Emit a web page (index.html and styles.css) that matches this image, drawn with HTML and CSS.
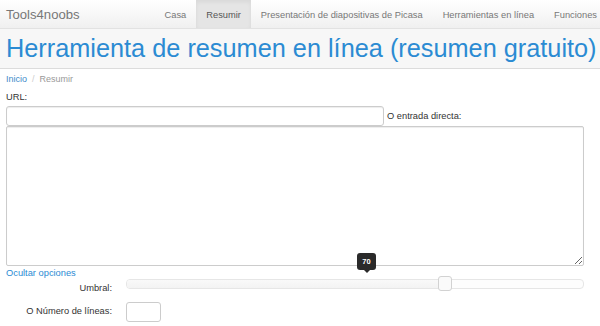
FILE: index.html
```html
<!DOCTYPE html>
<html lang="es">
<head>
    <meta charset="UTF-8">
    <meta name="viewport" content="width=device-width, initial-scale=1.0">
    <title>Herramienta de resumen en línea</title>
    <link rel="stylesheet" href="styles.css">
</head>
<body>
    <div class="navbar">
        <a href="#" class="brand">Tools4noobs</a>
        <ul class="nav">
            <li><a href="#">Casa</a></li>
            <li class="active"><a href="#">Resumir</a></li>
            <li><a href="#">Presentación de diapositivas de Picasa</a></li>
            <li><a href="#">Herramientas en línea</a></li>
            <li><a href="#">Funciones</a></li>
        </ul>
    </div>

    <div class="page-header">
        <h1>Herramienta de resumen en línea (resumen gratuito)</h1>
    </div>

    <div class="content">
        <ul class="breadcrumb">
            <li><a href="#">Inicio</a></li>
            <li class="divider">/</li>
            <li class="current">Resumir</li>
        </ul>

        <form class="summary-form">
            <label for="url" class="field-label">URL:</label>
            <div class="url-row">
                <input type="text" id="url" name="url" class="url-input">
                <label for="text" class="direct-label">O entrada directa:</label>
            </div>
            <textarea id="text" name="text" class="text-input"></textarea>

            <a href="#" class="toggle-options">Ocultar opciones</a>

            <div class="options">
                <label class="option-label">Umbral:</label>
                <div class="slider">
                    <div class="slider-track">
                        <div class="slider-selection" style="width: 69.6%"></div>
                    </div>
                    <div class="slider-handle" style="left: 69.6%"></div>
                    <div class="slider-tooltip">70</div>
                </div>

                <label for="lines" class="option-label">O Número de líneas:</label>
                <div>
                    <input type="text" id="lines" name="lines" class="lines-input">
                </div>
            </div>
        </form>
    </div>
</body>
</html>
```

FILE: styles.css
```css
body, html {
    margin: 0;
    padding: 0;
    font-family: "Liberation Sans", Arial, sans-serif;
    font-size: 9.3px;
    color: #333;
    background: #fff;
    overflow: hidden;
}

a {
    text-decoration: none;
}

/* barra superior */
.navbar {
    display: flex;
    align-items: stretch;
    height: 28px;
    background: linear-gradient(to bottom, #ffffff, #f0f0f0);
    border-bottom: 1px solid #e2e2e2;
    white-space: nowrap;
}

.brand {
    display: flex;
    align-items: center;
    padding: 1px 0 0 6px;
    font-size: 13.1px;
    color: #777;
}

.nav {
    display: flex;
    margin: 0 0 0 75px;
    padding: 0;
    list-style: none;
}

.nav li a {
    display: flex;
    align-items: center;
    height: 100%;
    padding: 1px 10px 0;
    box-sizing: border-box;
    color: #777;
}

.nav li.active a {
    background: #e5e5e5;
    color: #555;
    box-shadow: inset 0 2px 4px rgba(0,0,0,0.06);
}

/* cabecera */
.page-header {
    background: #f7f7f7;
    border-bottom: 1px solid #dcdcdc;
    height: 39px;
    padding-left: 6px;
}

h1 {
    margin: 0;
    font-size: 25.3px;
    font-weight: normal;
    line-height: 38px;
    color: #2b8bd3;
    white-space: nowrap;
}

.content {
    padding: 0 16px 0 6px;
}

.breadcrumb {
    display: flex;
    gap: 5px;
    margin: 4px 0 0;
    padding: 0;
    list-style: none;
    font-size: 9px;
    line-height: 12px;
}

.breadcrumb a {
    color: #428bca;
}

.breadcrumb .divider {
    color: #ccc;
}

.breadcrumb .current {
    color: #999;
}

.field-label {
    display: block;
    margin-top: 6px;
    line-height: 12px;
}

.url-row {
    display: flex;
    align-items: center;
    margin-top: 3px;
}

.url-input {
    box-sizing: border-box;
    width: 378px;
    height: 20px;
    margin: 0;
    border: 1px solid #ccc;
    border-radius: 3px;
    box-shadow: inset 0 1px 1px rgba(0,0,0,0.075);
}

.direct-label {
    margin-left: 3px;
}

.text-input {
    display: block;
    box-sizing: border-box;
    width: 578px;
    height: 140px;
    margin: 0;
    border: 1px solid #ccc;
    border-radius: 2px;
    box-shadow: inset 0 1px 1px rgba(0,0,0,0.075);
}

.toggle-options {
    display: block;
    margin-top: 1px;
    line-height: 12px;
    color: #2b8bd3;
}

/* opciones */
.options {
    display: grid;
    grid-template-columns: 106px 458px;
    column-gap: 14px;
    row-gap: 4px;
    align-items: start;
}

.option-label {
    text-align: right;
    line-height: 19px;
}

.slider {
    position: relative;
    height: 10px;
}

.slider-track {
    position: absolute;
    top: 0;
    left: 0;
    right: 0;
    box-sizing: border-box;
    height: 10px;
    background: #fdfdfd;
    border: 1px solid #e6e6e6;
    border-radius: 4px;
    overflow: hidden;
}

.slider-selection {
    height: 100%;
    background: linear-gradient(to bottom, #f9f9f9, #f3f3f3);
}

.slider-handle {
    position: absolute;
    top: -3px;
    box-sizing: border-box;
    width: 14px;
    height: 15px;
    margin-left: -7px;
    background: #fafafa;
    border: 1px solid #d2d2d2;
    border-radius: 3px;
}

.slider-tooltip {
    position: absolute;
    left: 231px;
    top: -26px;
    width: 19px;
    height: 17px;
    line-height: 17px;
    text-align: center;
    font-size: 7.5px;
    font-weight: bold;
    color: #fff;
    background: #2a2a2a;
    border-radius: 3px;
}

.slider-tooltip::after {
    content: "";
    position: absolute;
    left: 50%;
    bottom: -3px;
    margin-left: -3px;
    border-left: 3px solid transparent;
    border-right: 3px solid transparent;
    border-top: 3px solid #2a2a2a;
}

.lines-input {
    display: block;
    box-sizing: border-box;
    width: 35px;
    height: 20px;
    margin: 0;
    border: 1px solid #ccc;
    border-radius: 3px;
}
```
